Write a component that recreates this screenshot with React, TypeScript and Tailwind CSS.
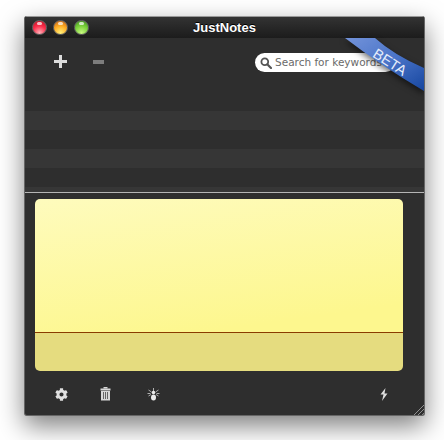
import { FaCog } from 'react-icons/fa';

function TrafficLight({ color }: { color: string }) {
  const fills: Record<string, string> = {
    red: 'bg-[radial-gradient(circle_at_50%_90%,#ffb0b8_0%,#fb2f4c_50%,#c00a1c_100%)]',
    amber: 'bg-[radial-gradient(circle_at_50%_90%,#fff07a_0%,#ffae24_50%,#c25c12_100%)]',
    green: 'bg-[radial-gradient(circle_at_50%_90%,#c8f880_0%,#7cd23c_50%,#3a8c1a_100%)]',
  };
  return (
    <div className={`relative w-[15px] h-[15px] rounded-full border border-[#666] ${fills[color]}`}>
      <div className="absolute top-[1px] left-[4px] w-[5px] h-[3px] rounded-full bg-white/70" />
    </div>
  );
}

function TrashIcon() {
  return (
    <svg width="11" height="14" viewBox="0 0 11 14">
      <rect x="3.500" y="0" width="4" height="1.500" fill="#d8d8d8" />
      <rect x="0.500" y="1.500" width="10" height="2" fill="#d8d8d8" />
      <path d="M1 4h9v9.500H1z" fill="#d8d8d8" />
      <path d="M3.500 5v7M5.500 5v7M7.500 5v7" stroke="#666" strokeWidth="1" />
    </svg>
  );
}

function BugIcon() {
  return (
    <svg width="13" height="13" viewBox="0 0 13 13">
      <path d="M6.500 0v4M1.500 2l3 2M11.500 2l-3 2M0.500 5.500h3M12.500 5.500h-3M1.500 8l2.500-1.500M11.500 8L9 6.500" stroke="#cfcfcf" strokeWidth="0.8" fill="none" />
      <circle cx="6.500" cy="4.500" r="1.800" fill="#ececec" />
      <ellipse cx="6.500" cy="9.500" rx="2.500" ry="3" fill="#ececec" />
    </svg>
  );
}

function BoltIcon() {
  return (
    <svg width="8" height="13" viewBox="0 0 8 13">
      <path d="M5.500 0L0.500 6.500H3.500L2 13L7.500 5.500H4.500L5.500 0Z" fill="#dedede" />
    </svg>
  );
}

function SearchIcon() {
  return (
    <svg width="12" height="12" viewBox="0 0 12 12" className="shrink-0">
      <circle cx="4.800" cy="4.800" r="3.400" fill="none" stroke="#555" strokeWidth="1.800" />
      <path d="M7.500 7.500L11 11" stroke="#555" strokeWidth="2.200" strokeLinecap="round" />
    </svg>
  );
}

export default function App() {
  return (
    <div className="w-[444px] h-[440px] bg-white pt-4 pl-6 font-['Liberation_Sans',sans-serif] overflow-hidden">
      <div className="relative w-[401px] h-[400px] flex flex-col bg-[#2e2e2e] rounded-[3px] border-x border-b border-[#666] shadow-[0_10px_26px_rgba(0,0,0,0.5)] overflow-hidden">
        {/* Title bar */}
        <header className="relative h-[22px] shrink-0 flex items-center pl-[7px] gap-[6px] border-t border-[#999] bg-gradient-to-b from-[#333333] to-[#1c1c1c]">
          <TrafficLight color="red" />
          <TrafficLight color="amber" />
          <TrafficLight color="green" />
          <span className="absolute inset-x-0 text-center text-[13px] font-bold text-white [text-shadow:0_-1px_0_#000]">JustNotes</span>
        </header>

        {/* Toolbar */}
        <div className="h-[73px] shrink-0 relative flex items-start pt-[17px]">
          <div className="flex items-center pl-[29px] gap-[26px]">
            <div className="relative w-[13px] h-[13px]">
              <div className="absolute left-0 top-[5px] w-[13px] h-[3px] bg-[#dcdcdc]" />
              <div className="absolute left-[5px] top-0 w-[3px] h-[13px] bg-[#dcdcdc]" />
            </div>
            <div className="w-[11px] h-[4px] bg-[#7d7d7d]" />
          </div>
          <div className="absolute left-[230px] top-[15px] w-[140px] h-[19px] rounded-full bg-white flex items-center pl-[5px] gap-[3px] overflow-hidden">
            <SearchIcon />
            <span className="text-[10.5px] text-[#6a6a6a] whitespace-nowrap font-['DejaVu_Sans',sans-serif]">Search for keywords</span>
          </div>
          {/* Beta ribbon */}
          <svg className="absolute right-0 top-0 drop-shadow-[0_3px_3px_rgba(0,0,0,0.55)]" width="80" height="60" viewBox="0 0 80 60">
            <defs>
              <linearGradient id="ribbon" x1="0" y1="0" x2="1" y2="1">
                <stop offset="0" stopColor="#7393da" />
                <stop offset="0.5" stopColor="#4a74c8" />
                <stop offset="1" stopColor="#16469f" />
              </linearGradient>
            </defs>
            <path d="M1 0L31 0Q50 17 80 30L80 53Q36 27 1 0Z" fill="url(#ribbon)" />
          </svg>
          <span className="absolute left-[344px] top-[15px] w-[42px] text-center text-[14.500px] leading-[18px] text-[#e4ecfa] rotate-[33deg]">BETA</span>
        </div>

        {/* Notes list */}
        <div className="h-[81px] shrink-0 flex flex-col">
          <div className="h-[19px] bg-[#363636]" />
          <div className="h-[19px] bg-[#2e2e2e]" />
          <div className="h-[19px] bg-[#363636]" />
          <div className="h-[19px] bg-[#2e2e2e]" />
          <div className="h-[5px] bg-[#363636]" />
        </div>
        <div className="h-px shrink-0 bg-[#b5b5b5]" />

        {/* Note editor */}
        <div className="shrink-0 pt-[6px] px-[10px]">
          <div className="h-[172px] w-[368px] rounded-[5px] overflow-hidden flex flex-col">
            <div className="h-[134px] bg-[linear-gradient(172deg,#fefbbd_0%,#fdf78e_85%)] border-b border-[#8a3c00]" />
            <div className="flex-1 bg-[#e5dc7f]" />
          </div>
        </div>

        {/* Bottom toolbar */}
        <footer className="flex-1 relative flex items-center pl-[30px] pt-[2px]">
          <FaCog size={13} className="text-[#e0e0e0]" />
          <div className="ml-[32px] flex"><TrashIcon /></div>
          <div className="ml-[36px] flex"><BugIcon /></div>
          <div className="ml-auto mr-[36px] flex"><BoltIcon /></div>
          <svg className="absolute right-0 bottom-0" width="11" height="11" viewBox="0 0 11 11">
            <path d="M1 11L11 1M5 11l6-6M9 11l2-2" stroke="#aaa" strokeWidth="0.8" fill="none" />
          </svg>
        </footer>
      </div>
    </div>
  );
}
